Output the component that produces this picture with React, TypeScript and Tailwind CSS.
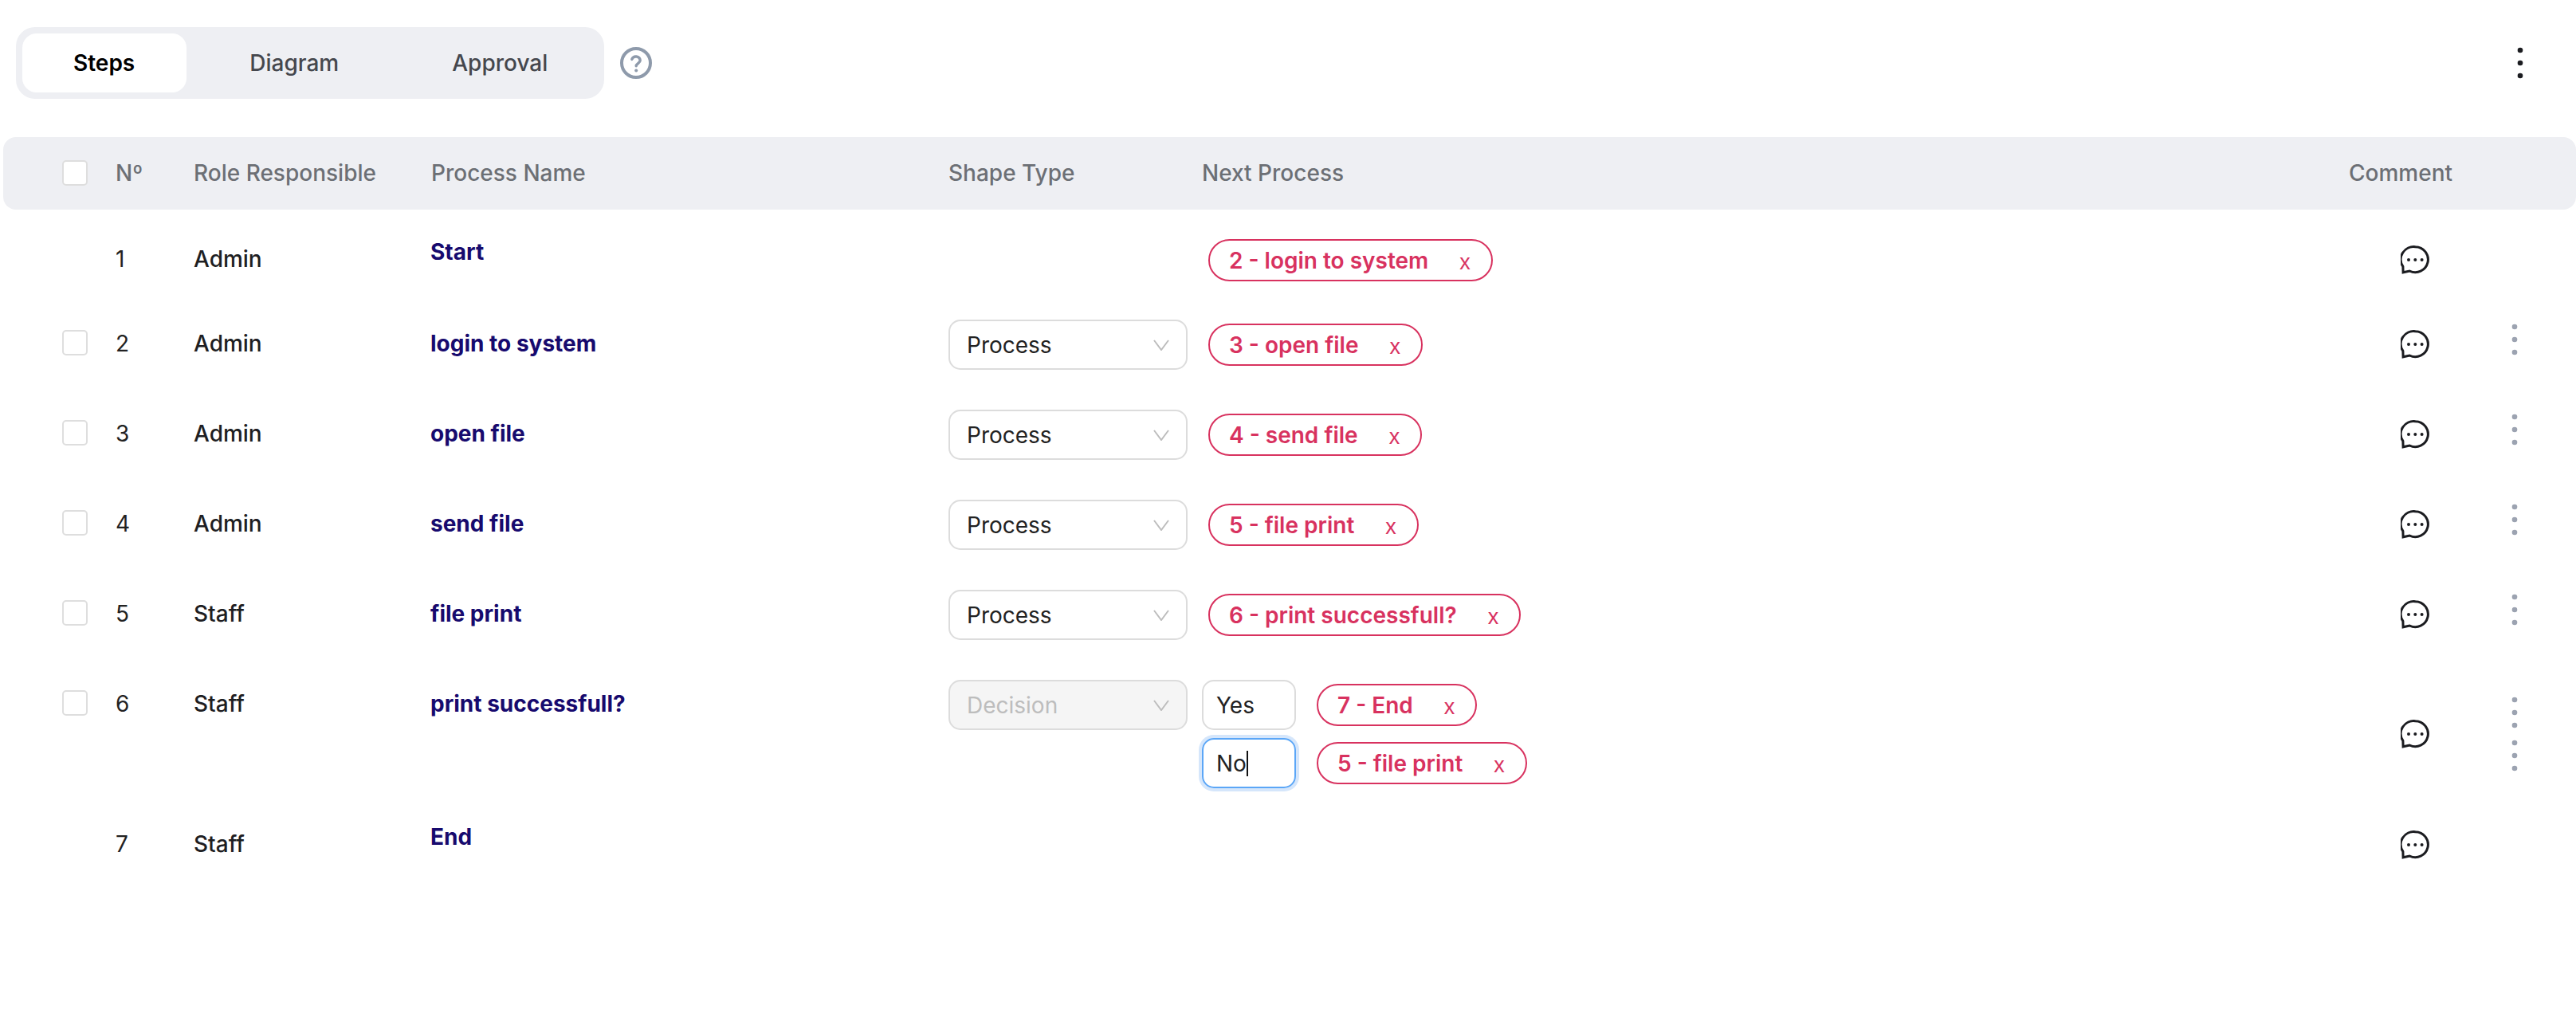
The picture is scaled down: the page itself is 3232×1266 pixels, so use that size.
const FONT = 'font-["Inter",sans-serif]'

type Step = {
    no: number
    role: string
    name: string
    shape?: string
    next?: string
    check?: boolean
}

const STEPS: Step[] = [
    { no: 1, role: 'Admin', name: 'Start', next: '2 - login to system' },
    { no: 2, role: 'Admin', name: 'login to system', shape: 'Process', next: '3 - open file', check: true },
    { no: 3, role: 'Admin', name: 'open file', shape: 'Process', next: '4 - send file', check: true },
    { no: 4, role: 'Admin', name: 'send file', shape: 'Process', next: '5 - file print', check: true },
    { no: 5, role: 'Staff', name: 'file print', shape: 'Process', next: '6 - print successfull?', check: true },
]

function Dots({ color }: { color: string }) {
    return (
        <svg width="8" height="40" viewBox="0 0 8 40" fill={color} className="block">
            <circle cx="4" cy="4" r="3.3" />
            <circle cx="4" cy="20" r="3.3" />
            <circle cx="4" cy="36" r="3.3" />
        </svg>
    )
}

function HelpIcon() {
    return (
        <svg width="40" height="40" viewBox="0 0 40 40" fill="none" className="block ml-[20px]">
            <circle cx="20" cy="20" r="18" stroke="#8e9aab" strokeWidth="4" />
            <path
                d="M14.8 15.4a5.4 5.4 0 0 1 10.4 1.4c0 3.4-5 4.2-5 7"
                stroke="#8e9aab"
                strokeWidth="3.4"
                strokeLinecap="round"
            />
            <circle cx="20.2" cy="29.4" r="2" fill="#8e9aab" />
        </svg>
    )
}

function CommentIcon() {
    return (
        <svg width="36" height="36" viewBox="0 0 36 36" fill="none" className="block">
            <path
                d="M18.5 1.7a16 16 0 1 1-7.3 30.3L3.1 33.8l-.2-7.4A16 16 0 0 1 18.5 1.7z"
                stroke="#1b1c20"
                strokeWidth="3"
                strokeLinejoin="miter"
            />
            <circle cx="10" cy="18" r="2" fill="#1b1c20" />
            <circle cx="18.3" cy="18" r="2" fill="#1b1c20" />
            <circle cx="26.6" cy="18" r="2" fill="#1b1c20" />
        </svg>
    )
}

function Chevron() {
    return (
        <svg width="20" height="14" viewBox="0 0 20 14" fill="none" className="block">
            <path d="M1 1l9 12 9-12" stroke="#bdbdbd" strokeWidth="2" />
        </svg>
    )
}

function Checkbox() {
    return <div className="w-[32px] h-[32px] rounded-[5px] border-2 border-[#dedede] bg-white" />
}

function Pill({ label }: { label: string }) {
    return (
        <div className="inline-flex items-center h-[53px] pl-[24px] pr-[26px] gap-[39px] rounded-full border-2 border-[#d8325f] text-[#d8325f]">
            <span className="font-semibold">{label}</span>
            <span className="mt-[4px] text-[27px] font-normal font-['Liberation_Sans',sans-serif]">x</span>
        </div>
    )
}

function ShapeSelect({ value, disabled }: { value: string; disabled?: boolean }) {
    return (
        <div
            className={
                disabled
                    ? 'w-[300px] h-[63px] pl-[21px] pr-[21px] flex items-center justify-between rounded-[15px] border-2 border-[#dcdcdc] bg-[#f5f5f5] text-[#bdbdbd]'
                    : 'w-[300px] h-[63px] pl-[21px] pr-[21px] flex items-center justify-between rounded-[15px] border-2 border-[#dcdcdc] bg-white text-[#222222]'
            }
        >
            {value}
            <Chevron />
        </div>
    )
}

function Row({ step }: { step: Step }) {
    const tall = !step.check
    return (
        <div className={tall ? 'flex h-[122px] pt-[32px] pl-[74px]' : 'flex h-[113px] pt-[16px] pl-[74px]'}>
            <div className="w-[67px] h-[63px] flex items-center pb-[6px]">{step.check && <Checkbox />}</div>
            <div className="w-[98px] h-[63px] flex items-center pb-[4px] text-[#222222]">{step.no}</div>
            <div className="w-[298px] h-[63px] flex items-center pb-[4px] font-medium text-[#1e1e22]">{step.role}</div>
            <div
                className={
                    tall
                        ? 'w-[650px] h-[63px] flex items-center pb-[22px] -ml-[1px] font-bold text-[#170a6e]'
                        : 'w-[650px] h-[63px] flex items-center pb-[4px] -ml-[1px] font-bold text-[#170a6e]'
                }
            >
                {step.name}
            </div>
            <div className="w-[326px] h-[63px] flex items-center">{step.shape && <ShapeSelect value={step.shape} />}</div>
            <div className="w-[1431px] h-[63px] flex items-center">{step.next && <Pill label={step.next} />}</div>
            <div className="w-[204px] h-[62px] flex items-center pl-[65px]">
                <CommentIcon />
            </div>
            <div className="h-[63px] flex items-start pt-[5px]">{step.check && <Dots color="#9ca3b1" />}</div>
        </div>
    )
}

// decision row has two branches, so it does not fit the plain Row
function DecisionRow() {
    return (
        <div className="flex h-[160px] pt-[16px] pl-[74px]">
            <div className="w-[67px] h-[63px] flex items-center pb-[6px]">
                <Checkbox />
            </div>
            <div className="w-[98px] h-[63px] flex items-center pb-[4px] text-[#222222]">6</div>
            <div className="w-[298px] h-[63px] flex items-center pb-[4px] font-medium text-[#1e1e22]">Staff</div>
            <div className="w-[650px] h-[63px] flex items-center pb-[4px] -ml-[1px] font-bold text-[#170a6e]">
                print successfull?
            </div>
            <div className="w-[318px]">
                <ShapeSelect value="Decision" disabled />
            </div>
            <div className="w-[1439px] flex flex-col gap-[10px]">
                <div className="flex items-center gap-[26px]">
                    <div className="w-[118px] h-[63px] pl-[16px] flex items-center rounded-[15px] border-2 border-[#dcdcdc] text-[#222222]">
                        Yes
                    </div>
                    <Pill label="7 - End" />
                </div>
                <div className="flex items-center gap-[26px]">
                    <div className="w-[118px] h-[63px] pl-[16px] flex items-center rounded-[15px] border-2 border-[#5ba6f7] ring-4 ring-[#d5e6fb] text-[#222222]">
                        No
                        <span className="w-[2px] h-[32px] bg-[#111111]" />
                    </div>
                    <Pill label="5 - file print" />
                </div>
            </div>
            <div className="w-[204px] h-[135px] flex items-center pl-[65px]">
                <CommentIcon />
            </div>
            <div className="flex flex-col gap-[14px] pt-[21px]">
                <Dots color="#9ca3b1" />
                <Dots color="#9ca3b1" />
            </div>
        </div>
    )
}

export default function App() {
    return (
        <div className={`${FONT} min-h-[1266px] bg-white text-[28px] leading-[36px] pt-[34px] overflow-hidden`}>
            <div className="flex items-center pl-[20px] pr-[66px]">
                <div className="flex gap-[16px] h-[90px] p-[8px] rounded-[24px] bg-[#eeeff3] font-medium text-[#45474d]">
                    <div className="flex items-center pl-[64px] pr-[65px] rounded-[18px] bg-white font-semibold text-black">Steps</div>
                    <div className="flex items-center px-[63px]">Diagram</div>
                    <div className="flex items-center pl-[63px] pr-[63px]">Approval</div>
                </div>
                <HelpIcon />
                <div className="ml-auto">
                    <Dots color="#1b1c20" />
                </div>
            </div>

            <div className="mt-[48px] ml-[4px]">
                <div className="flex items-center h-[91px] pb-[2px] pl-[74px] rounded-[16px] bg-[#eeeff3] font-medium text-[#6c6f75]">
                    <div className="w-[67px]">
                        <Checkbox />
                    </div>
                    <div className="w-[98px]">Nº</div>
                    <div className="w-[298px]">Role Responsible</div>
                    <div className="w-[649px]">Process Name</div>
                    <div className="w-[318px]">Shape Type</div>
                    <div className="w-[1439px]">Next Process</div>
                    <div>Comment</div>
                </div>
                {STEPS.map((step) => (
                    <Row key={step.no} step={step} />
                ))}
                <DecisionRow />
                <Row step={{ no: 7, role: 'Staff', name: 'End' }} />
            </div>
        </div>
    )
}
